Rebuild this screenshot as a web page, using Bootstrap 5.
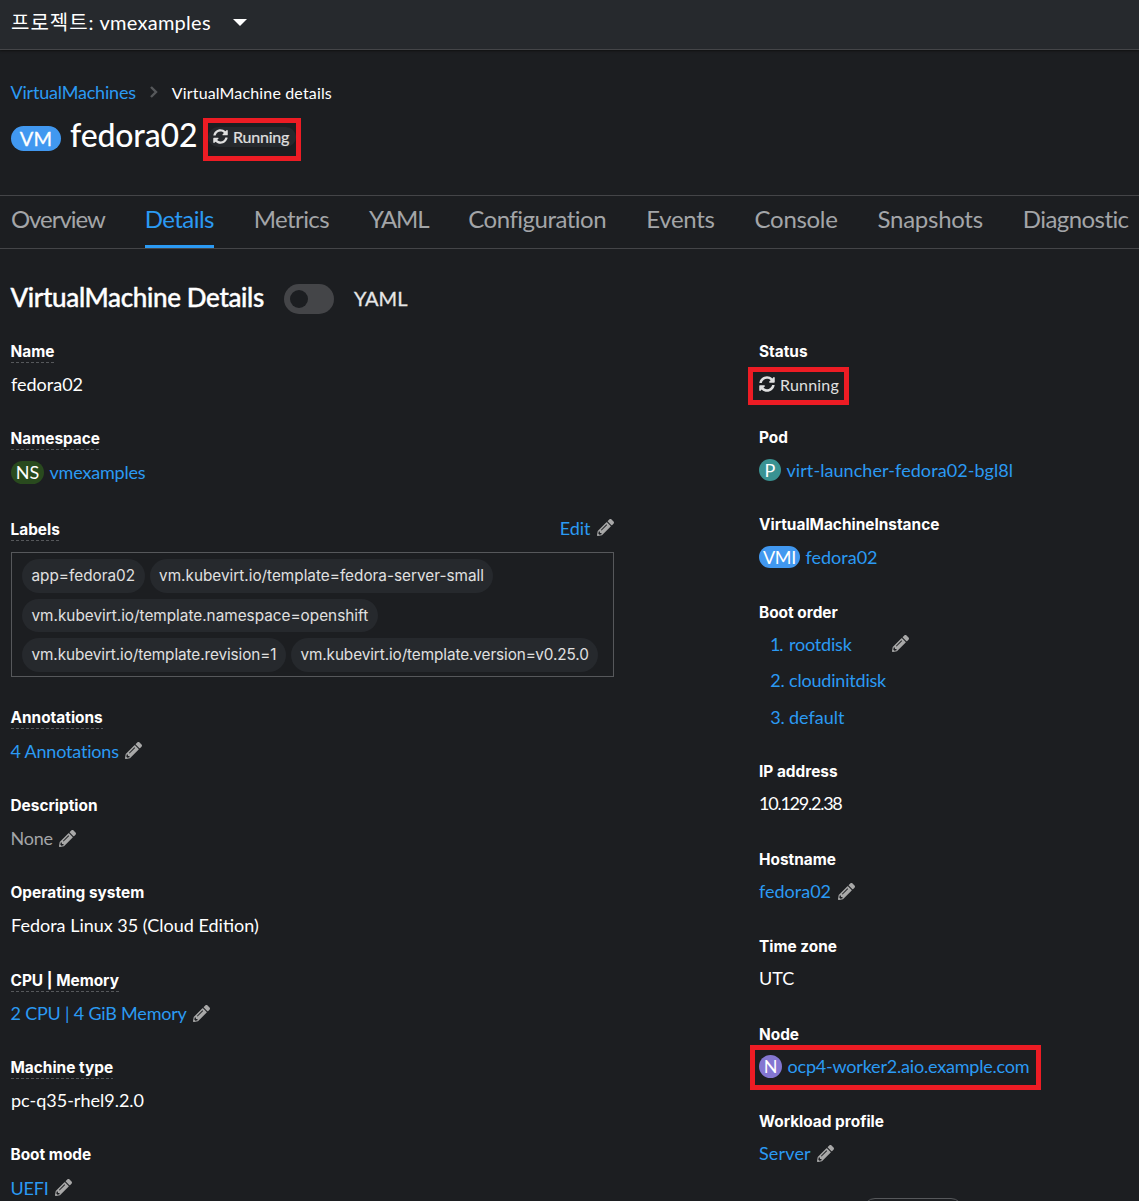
<!DOCTYPE html>
<html lang="ko" data-bs-theme="dark">
<head>
<meta charset="utf-8">
<title>fedora02 · Details</title>
<link rel="stylesheet" href="https://cdn.jsdelivr.net/npm/bootstrap@5.3.0/dist/css/bootstrap.min.css">
<style>
body{background:#1c1e21;color:#fff;font-family:Lato,"Noto Sans CJK KR",sans-serif;font-size:18px;line-height:27px;width:1139px;height:1201px;overflow:hidden}
a{color:#2b9af3;text-decoration:none}
.topbar{height:50px;background:#26292d;border-bottom:1px solid #444548;padding:0 0 4px 11px;font-size:20px;box-shadow:0 1px 2px #111}
.project-key{width:84px;letter-spacing:1px}
.project-name{letter-spacing:.26px;margin-left:4.5px}
.caret{width:0;height:0;border:7px solid transparent;border-top-color:#fff;border-bottom-width:0;margin-left:22px}
.crumbs{padding:30px 0 0 10.5px;height:70px;line-height:24px}
.crumbs .cur{font-size:16px;padding-top:1px;margin-left:14px}
.crumbs svg{margin:6px 0 0 14px}
.titlebar{height:75px;padding:0 0 40px 11px}
.kind{border-radius:20px;height:22px;line-height:22px;font-size:18px;text-align:center;flex:none;color:#fff}
.kind+a{margin-left:5.5px}
.kind-vm{background:#4198f0;width:50px;height:25px;line-height:25px;font-size:20px;letter-spacing:.3px;-webkit-text-stroke:.3px #fff;margin-top:2px}
.kind-ns{background:#294a1e;width:33px;height:23px;line-height:23px}
.kind-p{background:#399292;width:22px}
.kind-vmi{background:#4198f0;width:41px;letter-spacing:-.3px}
.kind-n{background:#8476d1;width:23px;height:23px;line-height:22px}
.vmname{font-size:32px;font-weight:500;letter-spacing:-.15px;line-height:40px;margin:-6px 0 0 9px;width:127px;white-space:nowrap}
.frame{border:5px solid #ed1c24;flex:none}
.state{color:#e0e0e0;font-size:16px}
.frame-head{width:98px;height:43px;margin:3px 0 0 6px;padding-top:4px}
.frame-head .state{height:20px;background:#26292d;border-radius:10px;padding-left:5px;gap:5px;letter-spacing:-.2px;-webkit-text-stroke:.2px #e0e0e0}
.tabs{height:54px;border-top:1px solid #444548;border-bottom:1px solid #444548;padding-left:11px;gap:40px;font-size:24px;flex-wrap:nowrap}
.tabs .nav-link{padding:0;color:#a3a5a8;line-height:46px;height:52px;white-space:nowrap;border-bottom:3px solid transparent}
.tabs .nav-link.active{color:#2b9af3;border-color:#2b9af3}
.heading{height:91px;padding:5px 0 0 10.5px}
.heading h2{font-size:26px;font-weight:500;letter-spacing:-.35px;margin:0;line-height:34px;width:253.5px;white-space:nowrap;-webkit-text-stroke:.4px #fff}
.toggle{width:50px;height:30px;border-radius:15px;background:#444548;margin:3px 20px 0;padding:6px}
.toggle span{display:block;width:18px;height:18px;border-radius:50%;background:#1c1e21}
.yaml{font-size:20px;-webkit-text-stroke:.3px #e0e0e0;color:#e8e8e8;margin-top:2px}
.leftcol{width:603px;margin-left:11px}
.rightcol{margin-left:145px;width:370px}
.leftcol .key span,.leftcol .val>:first-child:not(.kind){margin-left:-.5px}
.field{height:87.4px}
.field-ns{height:91px}
.field-status{height:86px}
.key{font:700 15.4px/24px Inter,sans-serif;height:24px;margin-bottom:6px}
.leftcol .key{margin-bottom:7px}
.key span{display:inline-block;height:23px;white-space:nowrap}
.key .hint{background:repeating-linear-gradient(90deg,#56585b 0 3px,transparent 3px 5px) bottom/100% 1px no-repeat}
.val{height:28px;white-space:nowrap}
.none{color:#a3a5a8}
.pen{width:17px;height:17px;fill:#a8a8a8;margin:-1px 0 0 6.5px;flex:none}
.labels{height:188px}
.edit{margin-top:-4px}
.chips{border:1px solid #56585b;width:603px;height:125px;margin-top:3px;padding:6px 10px;gap:6px 5px}
.chip{background:#26292d;color:#e0e0e0;border-radius:17px;height:33.4px;padding:0 9.5px;font:400 15.32px/33px Inter,sans-serif;white-space:nowrap}
.chip-tight{letter-spacing:-.09px}
.boots{height:159.6px}
.bootlist{gap:9.5px}
.bootlist .num{width:30px;text-align:right;flex:none}
.bootlist .pen{margin-left:40px}
.frame-state{width:101px;height:38px;margin:-3px 0 -6px -11px;padding:0 0 4px 6px;gap:5px}
.frame-state span{letter-spacing:.2px}
.frame-node{width:291px;height:45px;margin:-8px 0 -8px -9px;padding:0 0 1px 4px}
.tooltop{position:absolute;left:863px;top:1198px;width:100px;height:30px;border:1px solid #56585b;border-radius:12px}
.sp1{letter-spacing:-1.05px}.sp2{letter-spacing:-.57px}.sp3{letter-spacing:-.62px}.sp4{letter-spacing:-1.2px}.sp5{letter-spacing:-.3px}.sp6{letter-spacing:-.28px}.sp7{letter-spacing:-.5px}
.sq{letter-spacing:-.2px}.sw{letter-spacing:.15px}.sz{letter-spacing:.07px}.sip{letter-spacing:-1.25px}
</style>
<script src="https://cdn.jsdelivr.net/npm/bootstrap@5.3.0/dist/js/bootstrap.bundle.min.js"></script>
</head>
<body class="position-relative">
<svg width="0" height="0" class="position-absolute">
<symbol id="pen" viewBox="0 0 512 512"><path d="M497.9 142.1l-46.1 46.1c-4.7 4.7-12.3 4.7-17 0l-111-111c-4.7-4.7-4.7-12.3 0-17l46.1-46.1c18.7-18.7 49.1-18.7 67.9 0l60.1 60.1c18.8 18.7 18.8 49.1 0 67.9zM284.2 99.8L21.6 362.4.4 483.9c-2.9 16.4 11.4 30.6 27.8 27.8l121.5-21.3 262.6-262.6c4.7-4.7 4.7-12.3 0-17l-111-111c-4.8-4.7-12.4-4.7-17.1 0zM124.1 339.9c-5.5-5.5-5.5-14.3 0-19.8l154-154c5.5-5.5 14.3-5.5 19.8 0s5.5 14.3 0 19.8l-154 154c-5.5 5.5-14.3 5.5-19.8 0zM88 424h48v36.3l-64.5 11.3-31.1-31.1L51.7 376H88v48z"/></symbol>
<symbol id="sync" viewBox="0 0 512 512"><path d="M370.72 133.28C339.458 104.008 298.888 87.962 255.848 88c-77.458.068-144.328 53.178-162.791 126.85-1.344 5.363-6.122 9.15-11.651 9.15H24.103c-7.498 0-13.194-6.807-11.807-14.176C33.933 94.924 134.813 8 256 8c66.448 0 126.791 26.136 171.315 68.685L463.03 40.97C478.149 25.851 504 36.559 504 57.941V192c0 13.255-10.745 24-24 24H345.941c-21.382 0-32.09-25.851-16.971-40.971l41.75-41.749zM32 296h134.059c21.382 0 32.09 25.851 16.971 40.971l-41.75 41.75c31.262 29.273 71.835 45.319 114.876 45.28 77.418-.07 144.315-53.144 162.787-126.849 1.344-5.363 6.122-9.15 11.651-9.15h57.304c7.498 0 13.194 6.807 11.807 14.176C478.067 417.076 377.187 504 256 504c-66.448 0-126.791-26.136-171.315-68.685L48.97 471.03C33.851 486.149 8 475.441 8 454.059V320c0-13.255 10.745-24 24-24z"/></symbol>
</svg>
<header class="topbar d-flex align-items-center"><span class="project-key">프로젝트:</span><span class="project-name">vmexamples</span><span class="caret"></span></header>
<nav class="crumbs d-flex"><a href="#" class="sq">VirtualMachines</a><svg width="8" height="12" viewBox="0 0 8 12" fill="none" stroke="#56585b" stroke-width="2.4"><path d="M1 1l5 5-5 5"/></svg><span class="cur sw">VirtualMachine details</span></nav>
<div class="titlebar d-flex align-items-center"><span class="kind kind-vm">VM</span><h1 class="vmname">fedora02</h1><div class="frame frame-head"><div class="state d-flex align-items-center"><svg width="15" height="15" fill="#e0e0e0"><use href="#sync"/></svg>Running</div></div></div>
<ul class="nav tabs">
<li><a class="nav-link sp1" href="#">Overview</a></li>
<li><a class="nav-link active sp2" href="#">Details</a></li>
<li><a class="nav-link sp3" href="#">Metrics</a></li>
<li><a class="nav-link sp4" href="#">YAML</a></li>
<li><a class="nav-link sp7" href="#">Configuration</a></li>
<li><a class="nav-link sp5" href="#">Events</a></li>
<li><a class="nav-link sp5" href="#">Console</a></li>
<li><a class="nav-link sp6" href="#">Snapshots</a></li>
<li><a class="nav-link sp2" href="#">Diagnostic</a></li>
</ul>
<div class="heading d-flex align-items-center"><h2>VirtualMachine Details</h2><div class="toggle"><span></span></div><span class="yaml">YAML</span></div>
<main class="d-flex">
<section class="leftcol">
<div class="field"><div class="key"><span class="hint">Name</span></div><div class="val">fedora02</div></div>
<div class="field field-ns"><div class="key"><span class="hint">Namespace</span></div><div class="val d-flex align-items-center"><span class="kind kind-ns">NS</span><a href="#" class="sq">vmexamples</a></div></div>
<div class="labels"><div class="d-flex justify-content-between"><div class="key"><span class="hint">Labels</span></div><div class="val edit d-flex align-items-center"><a href="#">Edit</a><svg class="pen"><use href="#pen"/></svg></div></div>
<div class="chips d-flex flex-wrap align-content-start"><span class="chip">app=fedora02</span><span class="chip">vm.kubevirt.io/template=fedora-server-small</span><span class="chip">vm.kubevirt.io/template.namespace=openshift</span><span class="chip chip-tight">vm.kubevirt.io/template.revision=1</span><span class="chip chip-tight">vm.kubevirt.io/template.version=v0.25.0</span></div></div>
<div class="field"><div class="key"><span class="hint">Annotations</span></div><div class="val d-flex align-items-center"><a href="#" class="sq">4 Annotations</a><svg class="pen"><use href="#pen"/></svg></div></div>
<div class="field"><div class="key"><span>Description</span></div><div class="val d-flex align-items-center"><span class="none sq">None</span><svg class="pen"><use href="#pen"/></svg></div></div>
<div class="field"><div class="key"><span>Operating system</span></div><div class="val">Fedora Linux 35 (Cloud Edition)</div></div>
<div class="field"><div class="key"><span class="hint">CPU | Memory</span></div><div class="val d-flex align-items-center"><a href="#" class="sq">2 CPU | 4 GiB Memory</a><svg class="pen"><use href="#pen"/></svg></div></div>
<div class="field"><div class="key"><span class="hint">Machine type</span></div><div class="val">pc-q35-rhel9.2.0</div></div>
<div class="field"><div class="key"><span>Boot mode</span></div><div class="val d-flex align-items-center"><a href="#" class="sq">UEFI</a><svg class="pen"><use href="#pen"/></svg></div></div>
</section>
<section class="rightcol">
<div class="field field-status"><div class="key"><span>Status</span></div><div class="frame frame-state state d-flex align-items-center"><svg width="16" height="16" fill="#e0e0e0"><use href="#sync"/></svg><span>Running</span></div></div>
<div class="field"><div class="key"><span>Pod</span></div><div class="val d-flex align-items-center"><span class="kind kind-p">P</span><a href="#" class="sz">virt-launcher-fedora02-bgl8l</a></div></div>
<div class="field"><div class="key"><span>VirtualMachineInstance</span></div><div class="val d-flex align-items-center"><span class="kind kind-vmi">VMI</span><a href="#">fedora02</a></div></div>
<div class="boots"><div class="key"><span>Boot order</span></div><div class="bootlist d-flex flex-column"><a href="#" class="d-flex align-items-center"><span class="num sip">1.&nbsp;&nbsp;</span><span class="sq">rootdisk</span><svg class="pen"><use href="#pen"/></svg></a><a href="#" class="d-flex"><span class="num sq">2.&nbsp;</span><span class="sq">cloudinitdisk</span></a><a href="#" class="d-flex"><span class="num sq">3.&nbsp;</span><span>default</span></a></div></div>
<div class="field"><div class="key"><span>IP address</span></div><div class="val sip">10.129.2.38</div></div>
<div class="field"><div class="key"><span>Hostname</span></div><div class="val d-flex align-items-center"><a href="#">fedora02</a><svg class="pen"><use href="#pen"/></svg></div></div>
<div class="field"><div class="key"><span>Time zone</span></div><div class="val">UTC</div></div>
<div class="field"><div class="key"><span>Node</span></div><div class="frame frame-node d-flex align-items-center"><span class="kind kind-n">N</span><a href="#" class="sq">ocp4-worker2.aio.example.com</a></div></div>
<div class="field"><div class="key"><span>Workload profile</span></div><div class="val d-flex align-items-center"><a href="#" class="sw">Server</a><svg class="pen"><use href="#pen"/></svg></div></div>
</section>
</main>
<div class="tooltop"></div>
</body>
</html>
